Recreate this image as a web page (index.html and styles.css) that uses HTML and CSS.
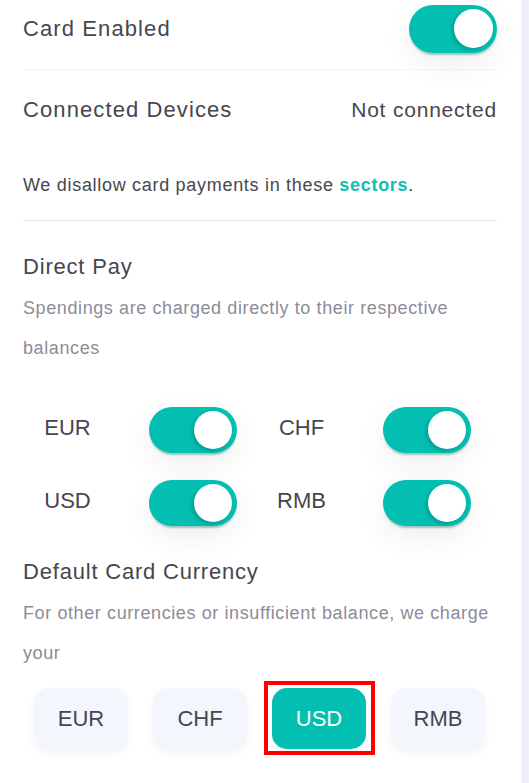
FILE: index.html
```html
<!DOCTYPE html>
<html lang="en">
<head>
  <meta charset="UTF-8">
  <meta name="viewport" content="width=device-width, initial-scale=1.0">
  <title>Card Settings</title>
  <link rel="stylesheet" href="styles.css">
</head>
<body>
  <div class="page">
    <main class="settings">
      <div class="row row-first">
        <span class="row-label">Card Enabled</span>
        <span class="toggle toggle-big on"><span class="knob"></span></span>
      </div>
      <div class="row row-devices">
        <span class="row-label">Connected Devices</span>
        <span class="row-value">Not connected</span>
      </div>
      <p class="notice">We disallow card payments in these <a class="link" href="#">sectors</a>.</p>

      <h2 class="section-title">Direct Pay</h2>
      <p class="section-desc">Spendings are charged directly to their respective balances</p>
      <div class="currency-grid">
        <div class="currency-switch">
          <span class="currency-label">EUR</span>
          <span class="toggle on"><span class="knob"></span></span>
        </div>
        <div class="currency-switch">
          <span class="currency-label">CHF</span>
          <span class="toggle on"><span class="knob"></span></span>
        </div>
        <div class="currency-switch">
          <span class="currency-label">USD</span>
          <span class="toggle on"><span class="knob"></span></span>
        </div>
        <div class="currency-switch">
          <span class="currency-label">RMB</span>
          <span class="toggle on"><span class="knob"></span></span>
        </div>
      </div>

      <h2 class="section-title section-title-2">Default Card Currency</h2>
      <p class="section-desc">For other currencies or insufficient balance, we charge your</p>
      <div class="currency-buttons">
        <button class="currency-btn">EUR</button>
        <button class="currency-btn">CHF</button>
        <button class="currency-btn selected">USD<span class="highlight"></span></button>
        <button class="currency-btn">RMB</button>
      </div>
    </main>
    <div class="side-strip"></div>
  </div>
</body>
</html>
```

FILE: styles.css
```css
body {
  margin: 0;
  font-family: "Liberation Sans", Arial, sans-serif;
  color: #46464e;
  background: #fff;
}
.page {
  display: flex;
  height: 783px;
  overflow: hidden;
}
.settings {
  width: 474px;
  padding: 0 24px 0 23px;
  flex: none;
}
.side-strip {
  flex: 1;
  background-color: #eef1f8;
}
.row {
  display: flex;
  justify-content: space-between;
  align-items: center;
}
.row-first {
  padding: 5px 0 16px;
  border-bottom: 1px solid #f4f4f4;
}
.row-devices {
  height: 80px;
}
.row-label {
  font-size: 22px;
  letter-spacing: 1.1px;
}
.row-value {
  font-size: 21px;
  letter-spacing: 0.8px;
}
.notice {
  margin: 20px 0 0;
  padding-bottom: 20px;
  line-height: 30px;
  font-size: 18px;
  letter-spacing: 0.7px;
  border-bottom: 1px solid #e6e6e6;
}
.link {
  color: #0fbfb1;
  font-weight: bold;
  text-decoration: none;
}
.section-title {
  margin: 31px 0 0;
  font-size: 22px;
  font-weight: normal;
  line-height: 30px;
  letter-spacing: 0.8px;
}
.section-desc {
  margin: 6px 0 0;
  font-size: 18px;
  line-height: 40px;
  color: #8c8c98;
  letter-spacing: 0.6px;
}
.toggle {
  position: relative;
  display: inline-block;
  width: 88px;
  height: 46px;
  border-radius: 23px;
  background-color: #e0e0e0;
  box-shadow: 0 3px 2px -1px rgba(0, 110, 100, 0.35), 0 10px 30px rgba(0, 0, 0, 0.07);
  flex: none;
}
.toggle.on {
  background-color: #02bfb1;
}
.toggle-big {
  height: 48px;
  border-radius: 24px;
}
.knob {
  position: absolute;
  top: 4px;
  right: 5px;
  width: 38px;
  height: 38px;
  border-radius: 50%;
  background-color: #fff;
  box-shadow: -2px 2px 4px rgba(0, 0, 0, 0.18);
}
.toggle-big .knob {
  width: 39px;
  height: 39px;
  top: 4px;
  right: 4px;
}
.currency-grid {
  margin-top: 39px;
  display: grid;
  grid-template-columns: 214px 214px;
  column-gap: 20px;
  row-gap: 27px;
}
.currency-switch {
  display: flex;
  align-items: center;
  gap: 37px;
}
.currency-label {
  width: 90px;
  text-align: center;
  font-size: 22px;
  margin-top: -4px;
}
.currency-buttons {
  margin: 15px 0 0 11px;
  display: flex;
  gap: 25px;
}
.currency-btn {
  position: relative;
  width: 94px;
  height: 61px;
  padding: 0;
  border: none;
  border-radius: 15px;
  background-color: #f3f6fd;
  box-shadow: 0 4px 10px rgba(0, 0, 0, 0.05);
  font-family: inherit;
  font-size: 22px;
  color: #46464e;
}
.currency-btn.selected {
  background-color: #02bfb1;
  color: #fff;
}
.highlight {
  position: absolute;
  top: -7px;
  left: -8px;
  right: -9px;
  bottom: -6px;
  border: 4px solid #ff0000;
}
```
